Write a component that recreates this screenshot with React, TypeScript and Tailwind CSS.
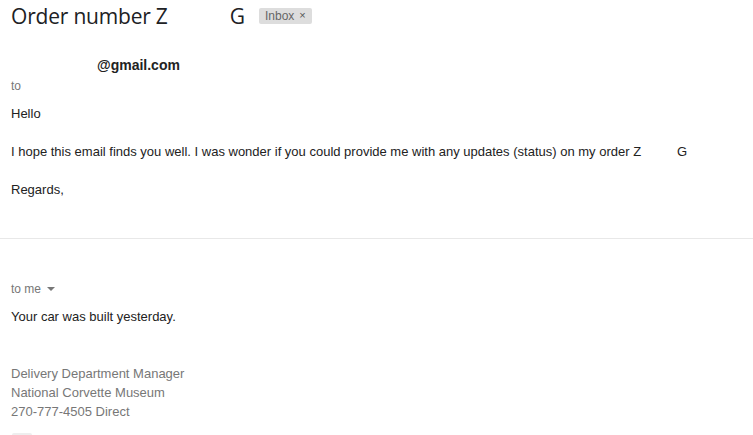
export default function App() {
  return (
    <div className="w-[753px] h-[435px] overflow-hidden bg-white text-[#222] font-['Liberation_Sans',Arial,sans-serif]">
      <div className="flex items-center h-[30px] pl-[11px] pt-[1px]">
        <span className="text-[21px] leading-[28px] text-[#202124] font-['Open_Sans',sans-serif] tracking-[-0.2px]">
          Order number Z
        </span>
        <span className="ml-[62px] text-[21px] leading-[28px] text-[#202124] font-['Open_Sans',sans-serif]">G</span>
        <span className="ml-[14px] flex items-center h-[16px] px-[6px] rounded-[2px] bg-[#dddddd] text-[12px] text-[#666]">
          Inbox
          <span className="ml-[5px] text-[11px] text-[#555]">×</span>
        </span>
      </div>

      <div className="pl-[97px] pt-[27px] text-[14px] leading-[16px] font-bold text-[#222]">@gmail.com</div>
      <div className="pl-[11px] pt-[6px] text-[12px] leading-[14px] text-[#777]">to</div>

      <div className="pl-[11px] pt-[2px] text-[13px] leading-[38px]">
        <p>Hello</p>
        <p>
          I hope this email finds you well. I was wonder if you could provide me with any updates (status) on my
          order Z<span className="ml-[36px]">G</span>
        </p>
        <p>Regards,</p>
      </div>

      <div className="mt-[29px] border-t border-[#e8e8e8]" />

      <div className="pl-[11px] pt-[43px] flex items-center text-[12px] leading-[14px] text-[#777]">
        to me
        <svg width="8" height="5" viewBox="0 0 8 5" className="ml-[6px]">
          <path d="M0 0h8L4 4z" fill="#777" />
        </svg>
      </div>
      <p className="pl-[11px] pt-[13px] text-[13px] leading-[16px]">Your car was built yesterday.</p>

      <div className="pl-[11px] pt-[39px] text-[13px] leading-[19px] text-[#777]">
        <p>Delivery Department Manager</p>
        <p>National Corvette Museum</p>
        <p>270-777-4505 Direct</p>
      </div>
      <div className="ml-[12px] mt-[12px] w-[20px] h-[10px] rounded-[2px] bg-[#eeeeee]" />
    </div>
  );
}
